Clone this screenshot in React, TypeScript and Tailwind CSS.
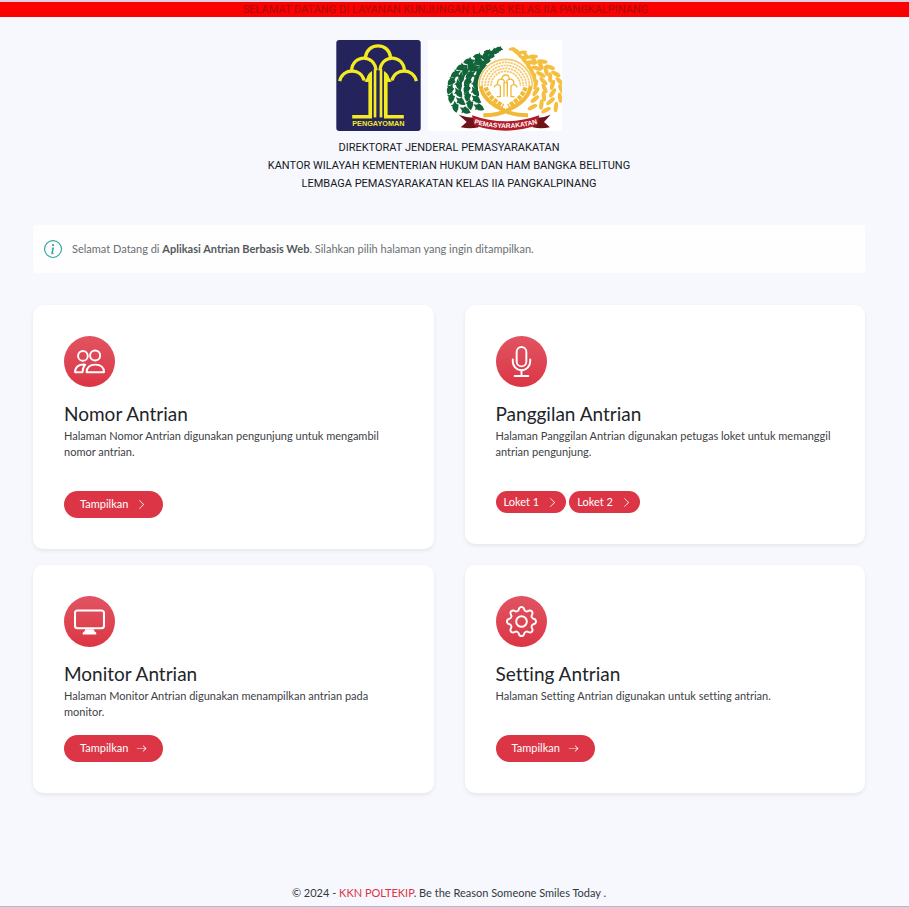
import React from 'react';
import { BsArrowRight, BsChevronRight, BsGear, BsInfoCircle, BsMic } from 'react-icons/bs';

type Point = [number, number];

const bezier = (p: Point[], t: number): Point => {
  const u = 1 - t;
  const axis = (k: 0 | 1) =>
    u * u * u * p[0][k] + 3 * u * u * t * p[1][k] + 3 * u * t * t * p[2][k] + t * t * t * p[3][k];
  return [axis(0), axis(1)];
};

// Outer and inner edge of the left half of the wreath
const outerEdge: Point[] = [[214, 26], [100, 56], [14, 130], [104, 230]];
const innerEdge: Point[] = [[214, 28], [160, 66], [118, 130], [158, 214]];

const leaves = [0, 0.33, 0.66, 1].flatMap((mix, row) =>
  Array.from({ length: 10 }, (_, i) => {
    const t = (i + (row % 2) * 0.5) / 10;
    const [ox, oy] = bezier(outerEdge, t);
    const [ix, iy] = bezier(innerEdge, t);
    const [nx, ny] = bezier(outerEdge, t + 0.03);
    return {
      x: ox + (ix - ox) * mix,
      y: oy + (iy - oy) * mix,
      turn: (Math.atan2(oy - ny, ox - nx) * 180) / Math.PI + (row % 2 === 0 ? 26 : -24),
      size: 0.65 + Math.min(t * 1.4, 0.4),
    };
  })
);

const PengayomanLogo: React.FC = () => (
  <svg viewBox="0 0 255 275" className="h-[91px] w-[85px]" role="img" aria-label="Logo Pengayoman">
    <rect width="255" height="275" rx="9" fill="#24235c" />
    <g fill="none" stroke="#f3ea22" strokeWidth="10">
      <path d="M88 52 C94 6 158 6 164 52" />
      <path d="M46 92 C50 42 116 42 120 92" />
      <path d="M132 92 C136 42 202 42 206 92" />
      <path d="M10 124 C20 84 74 84 84 122" />
      <path d="M168 122 C178 84 232 84 242 124" />
      <path strokeWidth="8" d="M117 234 V88" />
      <path strokeWidth="8" d="M135 234 V88" />
    </g>
    <g fill="#f3ea22">
      <path d="M80 118 Q86 130 92 114 Q96 100 108 94 V237 H48 V227 H97 V126 Q84 130 80 118 Z" />
      <path d="M172 118 Q166 130 160 114 Q156 100 144 94 V237 H204 V227 H155 V126 Q168 130 172 118 Z" />
    </g>
    <text x="127" y="261" textAnchor="middle" fill="#f3ea22" className="font-['Liberation_Sans',sans-serif] text-[22px] font-bold">
      PENGAYOMAN
    </text>
  </svg>
);

const PemasyarakatanLogo: React.FC = () => (
  <svg viewBox="0 0 402 273" className="h-[91px] w-[134px]" role="img" aria-label="Logo Pemasyarakatan">
    <rect width="402" height="273" fill="#ffffff" />
    <g fill="#f5be3e">
      {leaves.map((leaf, i) => (
        <ellipse
          key={i}
          rx="15"
          ry="6"
          transform={`translate(${466 - leaf.x} ${leaf.y}) rotate(${-leaf.turn}) scale(${leaf.size})`}
        />
      ))}
    </g>
    <g fill="#12643a">
      {leaves.map((leaf, i) => (
        <path
          key={i}
          d="M-17 1 Q-7 -11 2 -8 L5 -13 L8 -5 L18 0 L8 4 L6 10 Q-6 10 -17 1 Z"
          transform={`translate(${leaf.x} ${leaf.y}) rotate(${leaf.turn}) scale(${leaf.size})`}
        />
      ))}
    </g>
    <path d="M149 138 A84 84 0 0 1 317 138 Q312 186 233 222 Q154 186 149 138 Z" fill="#ffffff" />
    <g fill="none" stroke="#f4ca6e" strokeWidth="5">
      {[80, 71, 62, 53, 44].map((r) => (
        <path
          key={r}
          strokeDasharray={r === 80 ? undefined : '7 2'}
          d={`M${233 - r} 138 A${r} ${r} 0 0 1 ${233 + r} 138`}
        />
      ))}
    </g>
    {/* crossed stalks */}
    <g fill="none" stroke="#f2b938">
      <path strokeWidth="12" d="M158 138 Q164 182 226 210 Q254 226 300 226" />
      <path strokeWidth="12" d="M308 138 Q302 182 240 210 Q212 226 166 226" />
      <path strokeWidth="13" strokeDasharray="12 3" d="M173 142 Q184 176 226 198 M293 142 Q282 176 240 198" />
    </g>
    {/* banyan tree */}
    <g fill="none" stroke="#f2b938" strokeWidth="4">
      <path d="M221 120 C222 100 244 100 245 120" />
      <path d="M208 132 C209 112 229 114 231 130 M235 130 C237 114 257 112 258 132" />
      <path d="M198 142 Q206 128 217 138 V170 H206 M268 142 Q260 128 249 138 V170 H260" />
      <path d="M228 170 V126 M238 170 V126" />
    </g>
    <g>
      <path d="M92 224 Q124 236 150 232 L152 262 Q126 268 98 262 L116 246 Z" fill="#6f131b" />
      <path d="M368 224 Q342 236 316 232 L314 262 Q340 268 366 262 L348 246 Z" fill="#6f131b" />
      <path d="M132 226 Q233 262 334 226 L328 256 Q233 288 138 256 Z" fill="#b01c28" />
      <path id="ribbon" d="M132 249 Q233 279 334 249" fill="none" />
      <text fill="#ffffff" textAnchor="middle" className="font-['Liberation_Sans',sans-serif] text-[20px] font-bold">
        <textPath href="#ribbon" startOffset="50%">PEMASYARAKATAN</textPath>
      </text>
    </g>
  </svg>
);

const PeopleIcon: React.FC<{ className?: string }> = ({ className }) => (
  <svg viewBox="0 0 16 16" fill="none" stroke="currentColor" className={className} aria-hidden="true">
    <circle cx="4.6" cy="5.1" r="2.5" />
    <circle cx="10.9" cy="4.9" r="2.6" />
    <path strokeLinejoin="round" d="M6.5 13.5 Q6.6 9.6 11 9.6 Q15.4 9.6 15.5 13.5 Z" />
    <path strokeLinejoin="round" d="M5.8 9.6 Q0.8 9.2 0.5 13.5 H4.4 Q4.5 11 5.8 9.6 Z" />
  </svg>
);

const DisplayIcon: React.FC<{ className?: string }> = ({ className }) => (
  <svg viewBox="0 0 16 16" fill="currentColor" className={className} aria-hidden="true">
    <rect x="0.5" y="2.3" width="15" height="9.2" rx="1.3" fill="none" stroke="currentColor" strokeWidth="1.1" />
    <path d="M5.8 12 H10.2 Q10.2 13.4 11.5 13.8 V14.7 H4.5 V13.8 Q5.8 13.4 5.8 12 Z" />
  </svg>
);

interface CardLink {
  label: string;
  arrow: 'chevron' | 'arrow';
  small?: boolean;
}

interface MenuCardProps {
  icon: React.ReactNode;
  title: string;
  text: string;
  links: CardLink[];
  spaced?: boolean;
}

const MenuCard: React.FC<MenuCardProps> = ({ icon, title, text, links, spaced }) => (
  <section className="rounded-[10px] bg-white p-[31px] shadow-[0_2px_4px_rgba(0,0,0,0.07)]">
    <div className="flex size-[51px] items-center justify-center rounded-full bg-linear-to-b from-[#e15361] to-[#dc3545] text-white">
      {icon}
    </div>
    <h2 className="mt-4 text-[19px] leading-[22px] text-[#212529]">{title}</h2>
    <p className="mt-[3px] text-[11px] leading-4 text-[#3c4146]">{text}</p>
    <div className={spaced ? 'mt-[31px] flex gap-[3px]' : 'mt-[15px] flex gap-[3px]'}>
      {links.map((link) => (
        <a
          key={link.label}
          href="#"
          className={
            link.small
              ? 'flex h-[22px] items-center gap-2 rounded-full bg-[#dc3545] px-2 text-[11px] text-white'
              : 'flex h-[27px] items-center gap-2 rounded-full bg-[#dc3545] px-4 text-[11px] text-white'
          }
        >
          {link.label}
          {link.arrow === 'chevron' ? <BsChevronRight className="size-[11px]" /> : <BsArrowRight className="size-[11px]" />}
        </a>
      ))}
    </div>
  </section>
);

const App: React.FC = () => {
  return (
    <div className="flex min-h-screen flex-col border-t-2 border-b border-t-[#e0cfe2] border-b-[#a9bcd8] bg-[#f6f8fd] font-[Lato,sans-serif] [font-variant-ligatures:none]">
      <div className="bg-[#fb0000] pr-[18px] text-center font-[Roboto,sans-serif] text-[11px] leading-[15px] text-[#a30f0c]">
        SELAMAT DATANG DI LAYANAN KUNJUNGAN LAPAS KELAS IIA PANGKALPINANG
      </div>

      <div className="flex grow flex-col pr-11 pl-[33px]">
        <header className="mt-[23px] text-center">
          <div className="flex justify-center gap-[7px]">
            <PengayomanLogo />
            <PemasyarakatanLogo />
          </div>
          <h1 className="mt-2 font-[Roboto,sans-serif] text-[11px] leading-[18px] text-[#16191c]">
            DIREKTORAT JENDERAL PEMASYARAKATAN
            <br />
            KANTOR WILAYAH KEMENTERIAN HUKUM DAN HAM BANGKA BELITUNG
            <br />
            LEMBAGA PEMASYARAKATAN KELAS IIA PANGKALPINANG
          </h1>
        </header>

        <div className="mt-8 flex h-12 items-center gap-[10px] rounded-[3px] bg-[#fefefe] px-[11px] text-[11px] text-[#6a6e72]" role="alert">
          <BsInfoCircle className="size-[18px] text-[#2fa59b]" />
          <p>
            Selamat Datang di <strong className="font-bold text-[#55595d]">Aplikasi Antrian Berbasis Web</strong>. Silahkan pilih halaman yang ingin
            ditampilkan.
          </p>
        </div>

        <main className="mt-8 grid grid-cols-2 items-start gap-x-[31px] gap-y-4">
          <MenuCard
            icon={<PeopleIcon className="size-[31px]" />}
            title="Nomor Antrian"
            text="Halaman Nomor Antrian digunakan pengunjung untuk mengambil nomor antrian."
            links={[{ label: 'Tampilkan', arrow: 'chevron' }]}
            spaced
          />
          <MenuCard
            icon={<BsMic className="size-[31px]" />}
            title="Panggilan Antrian"
            text="Halaman Panggilan Antrian digunakan petugas loket untuk memanggil antrian pengunjung."
            links={[
              { label: 'Loket 1', arrow: 'chevron', small: true },
              { label: 'Loket 2', arrow: 'chevron', small: true },
            ]}
            spaced
          />
          <MenuCard
            icon={<DisplayIcon className="size-[31px]" />}
            title="Monitor Antrian"
            text="Halaman Monitor Antrian digunakan menampilkan antrian pada monitor."
            links={[{ label: 'Tampilkan', arrow: 'arrow' }]}
          />
          <MenuCard
            icon={<BsGear className="size-[31px]" />}
            title="Setting Antrian"
            text="Halaman Setting Antrian digunakan untuk setting antrian."
            links={[{ label: 'Tampilkan', arrow: 'arrow' }]}
            spaced
          />
        </main>

        <footer className="mt-auto pb-[5px] text-center text-[11px] leading-4 text-[#34383c]">
          © 2024 - <a href="#" className="text-[#dc3545]">KKN POLTEKIP</a>. Be the Reason Someone Smiles Today .
        </footer>
      </div>
    </div>
  );
};

export default App;
